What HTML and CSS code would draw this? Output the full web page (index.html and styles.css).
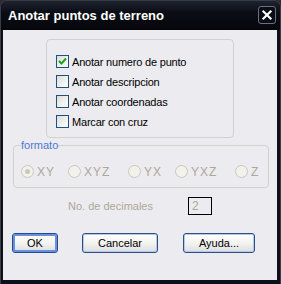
FILE: index.html
```html
<!DOCTYPE html>
<html>
<head>
<meta charset="utf-8">
<link rel="stylesheet" href="styles.css">
</head>
<body>
<div class="window">
  <div class="titlebar">
    <span class="title">Anotar puntos de terreno</span>
    <span class="close">
      <svg width="18" height="18" viewBox="0 0 18 18"><path d="M5 5 L13 13 M13 5 L5 13" stroke="#fff" stroke-width="2.4" stroke-linecap="square"/></svg>
    </span>
  </div>
  <div class="content">
    <div class="opts">
      <div class="row"><span class="check on"><svg width="11" height="11" viewBox="0 0 11 11"><path d="M2 5 L4.5 7.5 L9 2.5" fill="none" stroke="#21a121" stroke-width="2"/></svg></span><span>Anotar numero de punto</span></div>
      <div class="row"><span class="check"></span><span>Anotar descripcion</span></div>
      <div class="row"><span class="check"></span><span>Anotar coordenadas</span></div>
      <div class="row"><span class="check"></span><span>Marcar con cruz</span></div>
    </div>
    <fieldset class="formato">
      <legend>formato</legend>
      <div class="radios">
        <div class="radio r1"><span class="dot on"></span><span class="rl">XY</span></div>
        <div class="radio r2"><span class="dot"></span><span class="rl">XYZ</span></div>
        <div class="radio r3"><span class="dot"></span><span class="rl">YX</span></div>
        <div class="radio r4"><span class="dot"></span><span class="rl">YXZ</span></div>
        <div class="radio r5"><span class="dot"></span><span class="rl">Z</span></div>
      </div>
    </fieldset>
    <div class="decimals">
      <span class="dlabel">No. de decimales</span>
      <span class="dbox">2</span>
    </div>
    <div class="buttons">
      <button class="btn ok">OK</button>
      <button class="btn cancel">Cancelar</button>
      <button class="btn help">Ayuda...</button>
    </div>
  </div>
</div>
</body>
</html>
```
FILE: styles.css
```css
html, body {
  margin: 0;
  padding: 0;
  background: #2a2c33;
}
.window {
  width: 281px;
  height: 284px;
  box-sizing: border-box;
  background: #0d1019;
  border-radius: 7px 7px 0 0;
  border: 1px solid #3a3d47;
  border-bottom: none;
  padding: 0 3px 4px 2px;
  display: flex;
  flex-direction: column;
  font-family: "Liberation Sans", Arial, sans-serif;
  font-size: 11px;
}
.titlebar {
  height: 28px;
  display: flex;
  align-items: center;
  justify-content: space-between;
  background: linear-gradient(#1e2330 0%, #0b0d15 40%, #05070c 100%);
  margin: 0 -3px 0 -2px;
  padding: 0 3px 1px 7px;
  border-radius: 6px 6px 0 0;
}
.title {
  color: #fff;
  font-family: "Liberation Sans", Arial, sans-serif;
  font-weight: bold;
  font-size: 13px;
}
.close {
  width: 18px;
  height: 18px;
  border: 1px solid #6c7180;
  border-radius: 3px;
  background: #0a0d16;
  display: flex;
  box-sizing: border-box;
  align-items: center;
  justify-content: center;
  margin-right: 1px;
}
.close svg { width: 16px; height: 16px; }
.content {
  flex: 1;
  background: #ecebef;
  display: flex;
  flex-direction: column;
}
.opts {
  margin: 9px 0 0 43px;
  width: 188px;
  height: 99px;
  box-sizing: border-box;
  border: 1px solid #d3d1cc;
  border-radius: 4px;
  padding: 15px 0 0 9px;
  display: flex;
  flex-direction: column;
  gap: 7px;
}
.row {
  display: flex;
  align-items: center;
  height: 13px;
  gap: 3px;
  color: #000;
  letter-spacing: -0.2px;
}
.check {
  width: 13px;
  height: 13px;
  box-sizing: border-box;
  border: 1px solid #1c5180;
  background: linear-gradient(135deg, #dcdcd7 0%, #f2f2ef 60%, #ffffff 100%);
  display: flex;
  align-items: center;
  justify-content: center;
}
.formato {
  margin: 1px 0 0 10px;
  width: 256px;
  height: 49px;
  box-sizing: border-box;
  border: 1px solid #d3d1cc;
  border-radius: 4px;
  padding: 0 0 0 7px;
}
.formato legend {
  color: #4d79d4;
  padding: 0;
  margin-left: 0;
  font-size: 11px;
}
.radios {
  display: flex;
  align-items: center;
  height: 13px;
  margin-top: 14px;
}
.radio {
  display: flex;
  align-items: center;
  gap: 3px;
}
.r1, .r3 { width: 47px; }
.r2, .r4 { width: 60px; }
.dot {
  width: 13px;
  height: 13px;
  box-sizing: border-box;
  border: 1px solid #cac8bb;
  border-radius: 50%;
  background: #f2f1ec;
  position: relative;
}
.dot.on::after {
  content: "";
  position: absolute;
  left: 3px;
  top: 3px;
  width: 5px;
  height: 5px;
  border-radius: 50%;
  background: #cac8bb;
}
.rl {
  color: #aca899;
  font-size: 12px;
  letter-spacing: 1px;
}
.decimals {
  display: flex;
  align-items: center;
  margin: 9px 0 0 65px;
  height: 18px;
}
.dlabel {
  color: #aca899;
  width: 120px;
}
.dbox {
  width: 24px;
  height: 18px;
  box-sizing: border-box;
  border: 1px solid #000;
  color: #aca899;
  padding-left: 3px;
  line-height: 16px;
  font-size: 12px;
}
.buttons {
  display: flex;
  margin: 18px 0 0 9px;
}
.btn {
  height: 20px;
  box-sizing: border-box;
  border: 1px solid #2d4f86;
  border-radius: 3px;
  background: linear-gradient(#ffffff 0%, #f3f3f0 50%, #dcdde4 100%);
  font-family: "Liberation Sans", Arial, sans-serif;
  font-size: 11px;
  color: #000;
  padding: 0;
  box-shadow: inset 0 0 0 1px #b8c8e8;
}
.ok {
  width: 46px;
  border-color: #1f4a9a;
  box-shadow: inset 0 0 0 2px #6b8fd8;
}
.cancel { width: 76px; margin-left: 24px; }
.help { width: 72px; margin-left: 25px; }
```
